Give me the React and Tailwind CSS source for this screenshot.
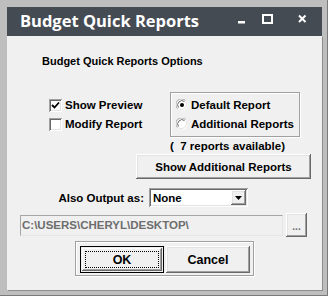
const raised =
  'bg-[#f0f0f0] shadow-[inset_-1px_-1px_#696969,inset_1px_1px_#fff,inset_-2px_-2px_#a0a0a0,inset_2px_2px_#e3e3e3]'
const sunken =
  'shadow-[inset_1px_1px_#a0a0a0,inset_-1px_-1px_#fff,inset_2px_2px_#696969,inset_-2px_-2px_#e3e3e3]'

function CheckBox({ checked }) {
  return (
    <span className={`w-[13px] h-[13px] bg-white shrink-0 flex items-center justify-center ${sunken}`}>
      {checked && (
        <svg width="9" height="9" viewBox="0 0 9 9">
          <path d="M1 4 L3.5 6.5 L8 1.5" stroke="#000" strokeWidth="1.8" fill="none" />
        </svg>
      )}
    </span>
  )
}

function Radio({ on }) {
  return (
    <svg width="12" height="12" viewBox="0 0 12 12" className="shrink-0">
      <circle cx="6" cy="6" r="5.5" fill="#fff" />
      <path d="M1.5 9.5 A5.5 5.5 0 0 1 9.5 1.5" stroke="#a0a0a0" strokeWidth="1" fill="none" />
      <path d="M2.5 8.5 A4.3 4.3 0 0 1 8.5 2.5" stroke="#696969" strokeWidth="1" fill="none" />
      <path d="M10.2 3 A5.5 5.5 0 0 1 3 10.2" stroke="#e3e3e3" strokeWidth="1" fill="none" />
      {on && <circle cx="6" cy="6" r="2" fill="#000" />}
    </svg>
  )
}

function TitleBar() {
  return (
    <div className="h-[29px] bg-[#444b53] flex items-start shrink-0">
      <span className="pl-[13px] pt-[3px] text-white text-[16.5px] leading-[22px] font-bold [font-family:'Open_Sans',sans-serif]">
        Budget Quick Reports
      </span>
      <svg width="72" height="12" viewBox="0 0 72 12" className="ml-auto mr-[12px] mt-[7px]">
        <rect x="0" y="7" width="7" height="2.5" fill="#fff" />
        <rect x="25" y="1" width="9" height="8" stroke="#fff" strokeWidth="2" fill="none" />
        <path d="M61 1.5 L67.5 8 M67.5 1.5 L61 8" stroke="#fff" strokeWidth="2" />
      </svg>
    </div>
  )
}

export default function App() {
  return (
    <div className="w-[328px] h-[296px] bg-[#bebebe] pt-[7px] pl-[7px] pr-[6px] pb-[6px] flex flex-col shadow-[inset_-1px_-1px_#7a7a7a] [font-family:'Liberation_Sans',Arial,sans-serif]">
      <TitleBar />
      <div className="flex-1 bg-[#f0f0f0] flex flex-col text-[11.5px] font-bold text-black leading-[16px] shadow-[1px_1px_#8c8c8c]">
        <p className="pl-[35px] pt-[17px] text-[11px]">Budget Quick Reports Options</p>

        <div className="flex mt-[23px]">
          <div className="ml-[42px] w-[121px] pt-[5px] flex flex-col gap-[3px]">
            <label className="h-[16px] flex items-center gap-[3px]">
              <CheckBox checked />
              Show Preview
            </label>
            <label className="h-[16px] flex items-center gap-[3px]">
              <CheckBox />
              Modify Report
            </label>
          </div>
          <div className="flex flex-col">
            <div className="w-[130px] h-[45px] border border-[#a0a0a0] shadow-[inset_1px_1px_#fff,1px_1px_#fff] pl-[5px] pt-[4px] flex flex-col gap-[3px]">
              <label className="h-[16px] flex items-center gap-[3px]">
                <Radio on />
                Default Report
              </label>
              <label className="h-[16px] flex items-center gap-[3px]">
                <Radio />
                Additional Reports
              </label>
            </div>
            <p className="mt-[1px] whitespace-pre">(  7 reports available)</p>
          </div>
        </div>

        <button className={`ml-[129px] w-[175px] h-[25px] ${raised}`}>Show Additional Reports</button>

        <div className="flex items-center mt-[9px]">
          <span className="w-[137px] text-right">Also Output as:</span>
          <div className={`ml-[5px] w-[99px] h-[19px] bg-white flex items-center ${sunken} pl-[4px] pr-[2px]`}>
            <span className="flex-1">None</span>
            <span className={`w-[15px] h-[15px] flex items-center justify-center ${raised}`}>
              <svg width="7" height="4" viewBox="0 0 7 4">
                <path d="M0 0 H7 L3.5 4 Z" fill="#000" />
              </svg>
            </span>
          </div>
        </div>

        <div className="flex items-center mt-[6px] ml-[13px] gap-[3px]">
          <div className="w-[263px] h-[21px] bg-[#f0f0f0] border border-[#a6a6a6] border-r-[#e6e6e6] border-b-[#e6e6e6] pl-[1px] flex items-center text-[#6d6d6d] text-[11.5px]">
            C:\USERS\CHERYL\DESKTOP\
          </div>
          <button className={`w-[21px] h-[24px] text-[#6d6d6d] text-[10px] leading-[10px] pt-[4px] ${raised}`}>...</button>
        </div>

        <div className="mt-[4px] ml-[68px] w-[179px] h-[35px] border border-[#a0a0a0] shadow-[inset_1px_1px_#fff,1px_1px_#fff] pl-[4px] pt-[4px] flex gap-[2px]">
          <button className="w-[84px] h-[27px] border border-black bg-[#f0f0f0] p-[1px]">
            <span className="w-full h-full flex items-center justify-center text-[12.5px] shadow-[inset_-1px_-1px_#696969,inset_1px_1px_#fff,inset_-2px_-2px_#a0a0a0] p-[3px]">
              <span className="w-full h-full flex items-center justify-center border border-dotted border-black">OK</span>
            </span>
          </button>
          <button className={`w-[84px] h-[27px] text-[12.5px] ${raised}`}>Cancel</button>
        </div>
      </div>
    </div>
  )
}
